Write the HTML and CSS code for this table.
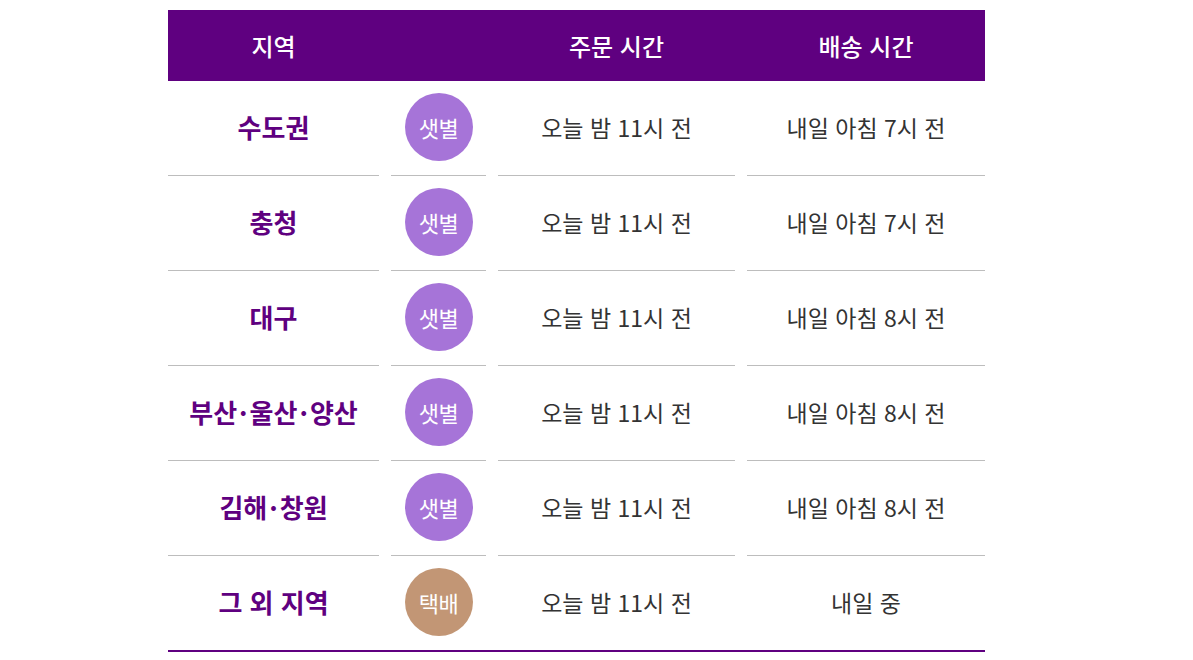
FILE: index.html
```html
<!DOCTYPE html>
<html lang="ko">
<head>
<meta charset="utf-8">
<link rel="stylesheet" href="styles.css">
</head>
<body>
<div class="table">
  <div class="row head">
    <div class="cell">지역</div>
    <div class="cell"></div>
    <div class="cell">주문 시간</div>
    <div class="cell">배송 시간</div>
  </div>
  <div class="row">
    <div class="cell region">수도권</div>
    <div class="cell"><span class="badge">샛별</span></div>
    <div class="cell">오늘 밤 11시 전</div>
    <div class="cell">내일 아침 7시 전</div>
  </div>
  <div class="row">
    <div class="cell region">충청</div>
    <div class="cell"><span class="badge">샛별</span></div>
    <div class="cell">오늘 밤 11시 전</div>
    <div class="cell">내일 아침 7시 전</div>
  </div>
  <div class="row">
    <div class="cell region">대구</div>
    <div class="cell"><span class="badge">샛별</span></div>
    <div class="cell">오늘 밤 11시 전</div>
    <div class="cell">내일 아침 8시 전</div>
  </div>
  <div class="row">
    <div class="cell region">부산<span class="dot">·</span>울산<span class="dot">·</span>양산</div>
    <div class="cell"><span class="badge">샛별</span></div>
    <div class="cell">오늘 밤 11시 전</div>
    <div class="cell">내일 아침 8시 전</div>
  </div>
  <div class="row">
    <div class="cell region">김해<span class="dot">·</span>창원</div>
    <div class="cell"><span class="badge">샛별</span></div>
    <div class="cell">오늘 밤 11시 전</div>
    <div class="cell">내일 아침 8시 전</div>
  </div>
  <div class="row last">
    <div class="cell region">그 외 지역</div>
    <div class="cell"><span class="badge parcel">택배</span></div>
    <div class="cell">오늘 밤 11시 전</div>
    <div class="cell">내일 중</div>
  </div>
</div>
</body>
</html>
```

FILE: styles.css
```css
html, body {
  margin: 0;
  padding: 0;
  background: #fff;
}
body {
  font-family: "Noto Sans CJK KR", "Noto Sans", sans-serif;
  color: #333;
}
.table {
  width: 817px;
  margin: 10px 0 0 168px;
  border-bottom: 2px solid #5f0080;
}
.row {
  display: grid;
  grid-template-columns: 211px 95px 237px 238px;
  column-gap: 12px;
}
.row .cell {
  box-sizing: border-box;
  height: 95px;
  padding-bottom: 3px;
  border-bottom: 1px solid #bdbdbd;
  display: flex;
  align-items: center;
  justify-content: center;
  font-size: 23px;
}
.row.last .cell {
  border-bottom: none;
  height: 94px;
}
.row.head {
  background: #5f0080;
}
.row.head .cell {
  height: 71px;
  padding-bottom: 0;
  border-bottom: none;
  color: #fff;
  font-weight: 500;
  font-size: 24px;
}
.row .region {
  color: #5f0080;
  font-weight: 700;
  font-size: 26px;
}
.dot {
  margin: 0 2px;
}
.badge {
  width: 68px;
  height: 68px;
  border-radius: 50%;
  background: #a674d8;
  color: #fff;
  font-size: 22px;
  font-weight: 400;
  display: flex;
  align-items: center;
  justify-content: center;
  letter-spacing: -0.5px;
}
.badge.parcel {
  background: #c29675;
}
```
